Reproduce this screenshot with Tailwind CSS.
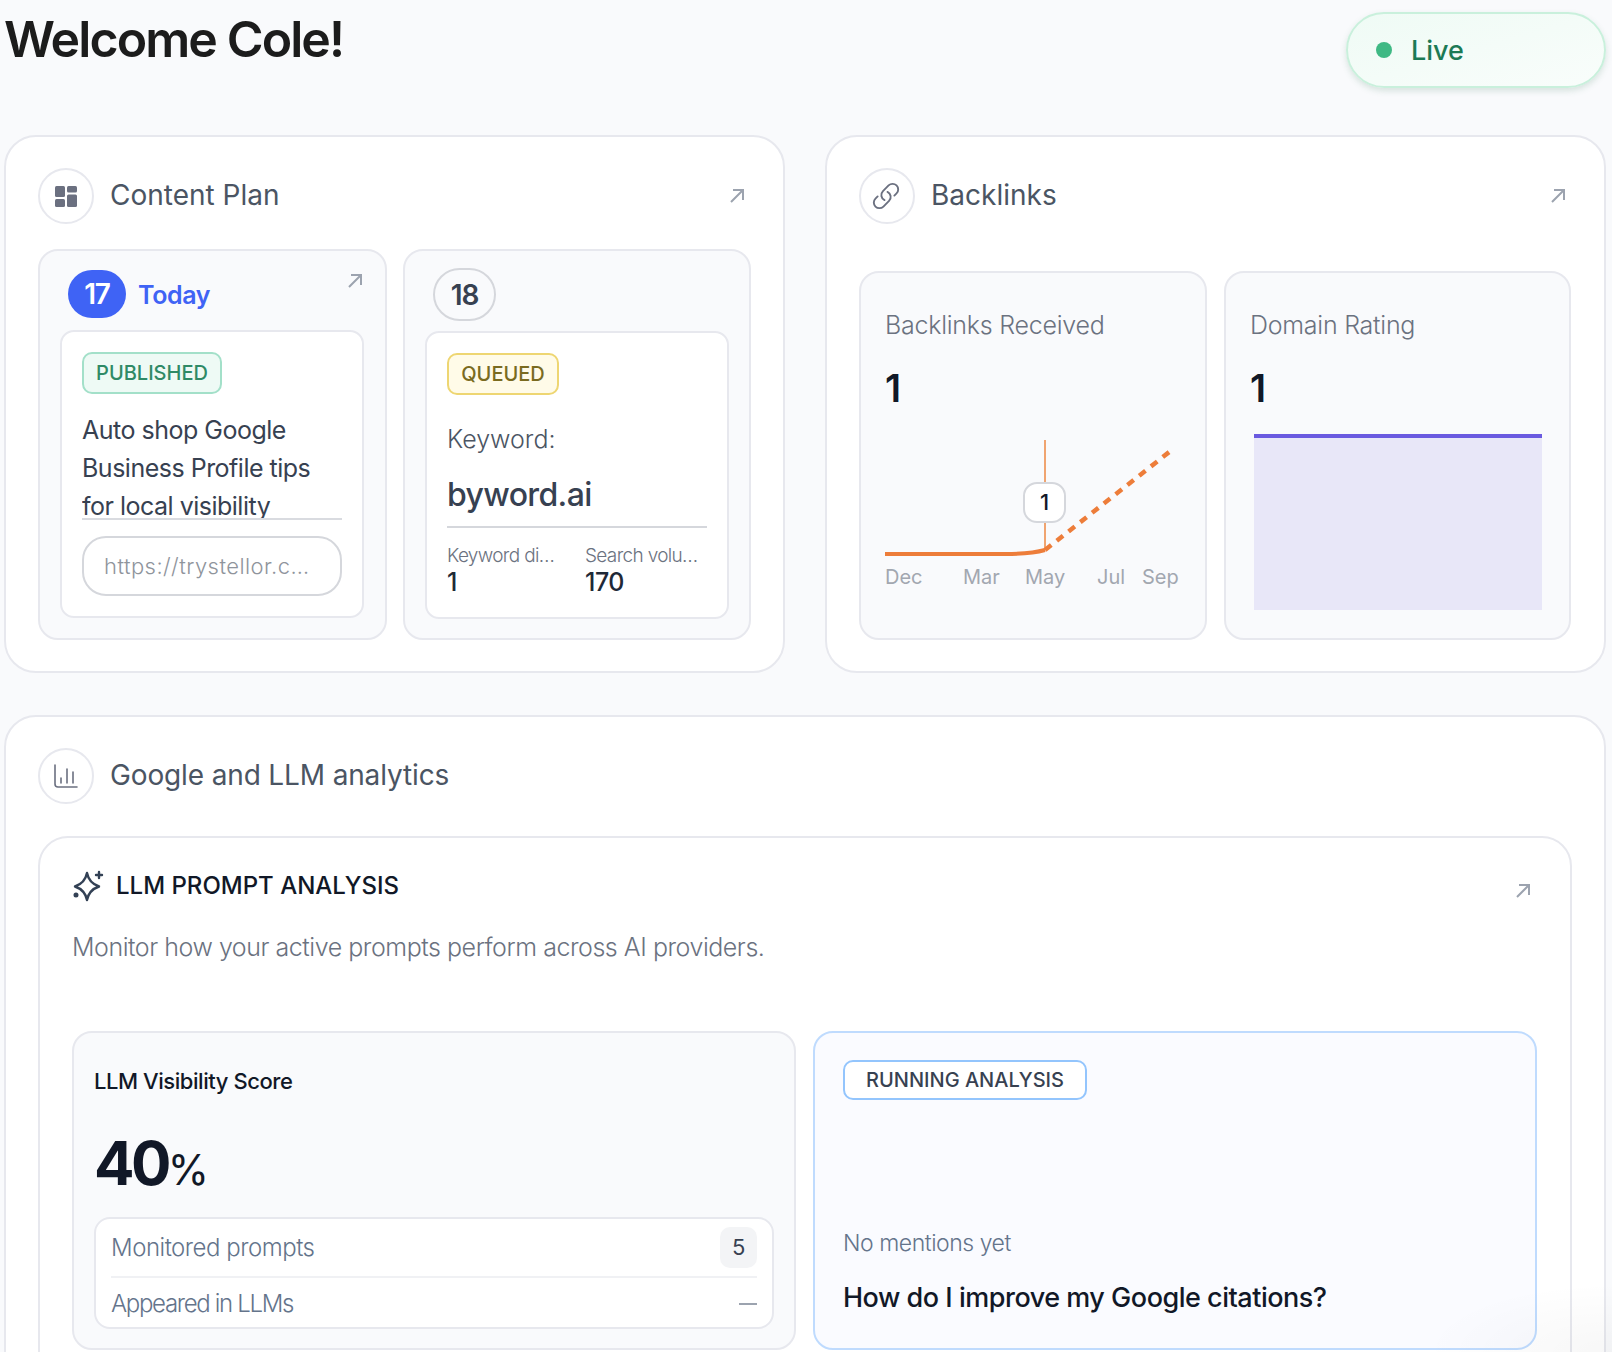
<!DOCTYPE html>
<html lang="en">
<head>
    <meta charset="UTF-8">
    <meta name="viewport" content="width=device-width, initial-scale=1.0">
    <title>Dashboard</title>
    <script src="https://cdn.jsdelivr.net/npm/@tailwindcss/browser@4"></script>
</head>
<body class="relative h-[1352px] overflow-hidden bg-[#f9fafc] font-['Inter',sans-serif] antialiased">
    <div class="ml-[4px] w-[1602px]">
        <!-- top bar -->
        <header class="flex h-[135px] items-start justify-between">
            <h1 class="mt-[11px] text-[50px] leading-[56px] font-semibold tracking-[-0.038em] text-[#1c1c1c]">Welcome Cole!</h1>
            <div class="mt-[12px] flex h-[76px] w-[260px] items-center rounded-full border-2 border-[#c9f0dc] bg-gradient-to-br from-[#effbf5] to-[#f9fdfb] pl-[28px] shadow-[0_3px_6px_rgba(60,120,90,0.18)]">
                <span class="h-[16px] w-[16px] rounded-full bg-[#3fb984]"></span>
                <span class="mt-[2px] ml-[19px] text-[27px] font-medium text-[#1c7a55]">Live</span>
            </div>
        </header>

        <div class="grid grid-cols-[781px_781px] gap-x-[40px]">
            <!-- content plan -->
            <section class="h-[538px] rounded-[32px] border-2 border-[#e7e8ee] bg-white px-[32px] pt-[31px]">
                <div class="flex h-[56px] items-center justify-between">
                    <div class="flex items-center">
                        <span class="flex h-[56px] w-[56px] items-center justify-center rounded-full border-2 border-[#e7e8ee]">
                            <svg width="22" height="21" viewBox="0 0 22 21" fill="#6b7080"><rect x="0" y="0" width="10" height="11" rx="1.5"/><rect x="12" y="0" width="10" height="6.5" rx="1.5"/><rect x="0" y="13" width="10" height="8" rx="1.5"/><rect x="12" y="8.5" width="10" height="12.5" rx="1.5"/></svg>
                        </span>
                        <h2 class="ml-[16px] pb-[3px] text-[28px] font-normal text-[#4b5563]">Content Plan</h2>
                    </div>
                    <svg class="mr-[6px]" width="16" height="16" viewBox="0 0 16 16" fill="none" stroke="#9ca3af" stroke-width="2"><path d="M4 2h10v10M14 2 2 14"/></svg>
                </div>

                <div class="mt-[25px] grid grid-cols-[349px_348px] gap-x-[16px]">
                    <!-- day 17 -->
                    <div class="relative h-[391px] rounded-[20px] border-2 border-[#e7e8ee] bg-[#f9fafc] pt-[19px] pr-[21px] pl-[20px]">
                        <svg class="absolute top-[22px] right-[22px]" width="16" height="16" viewBox="0 0 16 16" fill="none" stroke="#9ca3af" stroke-width="2"><path d="M4 2h10v10M14 2 2 14"/></svg>
                        <div class="flex h-[48px] items-center pl-[8px]">
                            <span class="flex h-[48px] w-[58px] items-center justify-center rounded-full bg-[#3f63f5] text-[28px] font-semibold tracking-[-0.04em] text-white">17</span>
                            <span class="mt-[4px] ml-[12px] text-[25px] font-semibold tracking-[-0.015em] text-[#3f63f5]">Today</span>
                        </div>
                        <div class="mt-[12px] h-[288px] rounded-[14px] border-2 border-[#e7e8ee] bg-white px-[20px] pt-[20px]">
                            <span class="flex h-[42px] w-[140px] items-center justify-center rounded-[10px] border-2 border-[#a3e0c9] bg-[#eefaf5] text-[20px] font-medium text-[#2f8a66]">PUBLISHED</span>
                            <p class="mt-[17px] h-[109px] w-[260px] overflow-hidden border-b-2 border-[#d9dbe0] text-[25px] leading-[38px] tracking-[-0.02em] text-[#374151]">Auto shop Google Business Profile tips for local visibility</p>
                            <div class="mt-[16px] flex h-[60px] w-[260px] items-center rounded-[24px] border-2 border-[#d5d7dc] pl-[20px] text-[22px] font-light tracking-[0.02em] text-[#8f949c]">https://trystellor.c…</div>
                        </div>
                    </div>

                    <!-- day 18 -->
                    <div class="h-[391px] rounded-[20px] border-2 border-[#e7e8ee] bg-[#f9fafc] px-[20px] pt-[17px]">
                        <span class="ml-[8px] flex h-[53px] w-[63px] items-center justify-center rounded-full border-2 border-[#d5d7dc] text-[28px] font-semibold tracking-[-0.04em] text-[#374151]">18</span>
                        <div class="mt-[10px] h-[288px] rounded-[14px] border-2 border-[#e7e8ee] bg-white px-[20px] pt-[20px]">
                            <span class="flex h-[42px] w-[112px] items-center justify-center rounded-[10px] border-2 border-[#eed672] bg-[#fffbe8] text-[20px] font-medium text-[#7a6b1f]">QUEUED</span>
                            <p class="mt-[27px] text-[25px] leading-[34px] font-light text-[#4b5563]">Keyword:</p>
                            <div class="mt-[17px] h-[55px] w-[260px] border-b-2 border-[#d5d7dc] text-[32px] leading-[44px] font-medium tracking-[-0.02em] text-[#374151]">byword.ai</div>
                            <div class="mt-[15px] flex">
                                <div class="w-[138px]">
                                    <p class="text-[19px] leading-[25px] font-light tracking-[-0.035em] text-[#6b7280]">Keyword di…</p>
                                    <p class="text-[25px] leading-[28px] font-medium text-[#1f2937]">1</p>
                                </div>
                                <div>
                                    <p class="text-[19px] leading-[25px] font-light tracking-[-0.035em] text-[#6b7280]">Search volu…</p>
                                    <p class="text-[25px] leading-[28px] font-medium tracking-[-0.02em] text-[#1f2937]">170</p>
                                </div>
                            </div>
                        </div>
                    </div>
                </div>
            </section>

            <!-- backlinks -->
            <section class="h-[538px] rounded-[32px] border-2 border-[#e7e8ee] bg-white px-[32px] pt-[31px]">
                <div class="flex h-[56px] items-center justify-between">
                    <div class="flex items-center">
                        <span class="flex h-[56px] w-[56px] items-center justify-center rounded-full border-2 border-[#e7e8ee]">
                            <svg class="mr-[2px]" width="30" height="30" viewBox="0 0 24 24" fill="none" stroke="#6b7080" stroke-width="1.5" stroke-linecap="round" stroke-linejoin="round"><path d="M13.19 8.688a4.5 4.5 0 0 1 1.242 7.244l-4.5 4.5a4.5 4.5 0 0 1-6.364-6.364l1.757-1.757m13.35-.622 1.757-1.757a4.5 4.5 0 0 0-6.364-6.364l-4.5 4.5a4.5 4.5 0 0 0 1.242 7.244"/></svg>
                        </span>
                        <h2 class="ml-[16px] pb-[3px] text-[28px] font-normal text-[#4b5563]">Backlinks</h2>
                    </div>
                    <svg class="mr-[6px]" width="16" height="16" viewBox="0 0 16 16" fill="none" stroke="#9ca3af" stroke-width="2"><path d="M4 2h10v10M14 2 2 14"/></svg>
                </div>

                <div class="mt-[47px] grid grid-cols-[348px_347px] gap-x-[17px]">
                    <div class="h-[369px] rounded-[20px] border-2 border-[#e7e8ee] bg-[#f9fafc] pt-[35px] pl-[24px]">
                        <p class="text-[25px] leading-[34px] font-light tracking-[-0.01em] text-[#6b7280]">Backlinks Received</p>
                        <p class="mt-[23px] text-[38px] leading-[46px] font-semibold text-[#111827]">1</p>
                        <!-- chart -->
                        <div class="relative mt-[19px] h-[162px] w-[300px]">
                            <svg width="300" height="162" viewBox="0 0 300 162" fill="none" class="block">
                                <path d="M160 10V120" stroke="#f0a470" stroke-width="2"/>
                                <path d="M0 124H120Q146 124 160 120" stroke="#ed7d3a" stroke-width="4"/>
                                <path d="M160 120 288 19" stroke="#ed7d3a" stroke-width="4.5" stroke-dasharray="8 7"/>
                                <g font-family="Inter, sans-serif" font-size="20" fill="#a2a7b0">
                                    <text x="0" y="154">Dec</text>
                                    <text x="78" y="154">Mar</text>
                                    <text x="140" y="154">May</text>
                                    <text x="212" y="154">Jul</text>
                                    <text x="257" y="154">Sep</text>
                                </g>
                            </svg>
                            <span class="absolute top-[52px] left-[138px] flex h-[41px] w-[43px] items-center justify-center rounded-[14px] border-2 border-[#d5d7dc] bg-white text-[22px] font-medium text-[#111827]">1</span>
                        </div>
                    </div>
                    <div class="h-[369px] rounded-[20px] border-2 border-[#e7e8ee] bg-[#f9fafc] pt-[35px] pl-[24px]">
                        <p class="text-[25px] leading-[34px] font-light tracking-[-0.01em] text-[#6b7280]">Domain Rating</p>
                        <p class="mt-[23px] text-[38px] leading-[46px] font-semibold text-[#111827]">1</p>
                        <div class="mt-[23px] ml-[4px] h-[176px] w-[288px] border-t-4 border-[#6a5ae0] bg-[#e8e7f8]"></div>
                    </div>
                </div>
            </section>
        </div>

        <!-- analytics -->
        <section class="mt-[42px] rounded-[32px] border-2 border-[#e7e8ee] bg-white px-[32px] pt-[32px] pb-[40px]">
            <div class="flex h-[54px] items-center">
                <span class="flex h-[56px] w-[56px] items-center justify-center rounded-full border-2 border-[#e7e8ee]">
                    <svg width="24" height="24" viewBox="0 0 24 24" fill="none" stroke="#6b7080" stroke-width="1.6" stroke-linecap="round"><path d="M1 1V20Q1 23 4 23H23"/><path d="M7 14V19M13 5V19M19 8V19"/></svg>
                </span>
                <h2 class="ml-[16px] pb-[3px] text-[28px] font-normal tracking-[-0.005em] text-[#4b5563]">Google and LLM analytics</h2>
            </div>

            <div class="relative mt-[33px] w-[1534px] rounded-[30px] border-2 border-[#e7e8ee] bg-white px-[32px] pt-[33px] pb-[40px]">
                <svg class="absolute top-[45px] right-[39px]" width="16" height="16" viewBox="0 0 16 16" fill="none" stroke="#9ca3af" stroke-width="2"><path d="M4 2h10v10M14 2 2 14"/></svg>
                <div class="flex h-[30px] items-center">
                    <svg width="32" height="32" viewBox="0 0 32 32" fill="none" stroke="#334155" stroke-width="2.4" stroke-linejoin="round" stroke-linecap="round"><path d="M15 3Q17 13 27 16.5 17 20 15 30 13 20 3 16.5 13 13 15 3Z"/><path d="M27 2V8M24 5H30"/><circle cx="4" cy="25" r="1.3" fill="#334155"/></svg>
                    <h3 class="ml-[12px] text-[24px] font-medium text-[#111827]">LLM PROMPT ANALYSIS</h3>
                </div>
                <p class="mt-[28px] text-[25px] leading-[36px] font-light tracking-[-0.0185em] text-[#6b7280]">Monitor how your active prompts perform across AI providers.</p>

                <div class="mt-[66px] grid grid-cols-[724px_724px] gap-x-[17px]">
                    <div class="h-[319px] rounded-[20px] border-2 border-[#e7e8ee] bg-[#f9fafc] px-[20px] pt-[32px]">
                        <p class="text-[22px] leading-[32px] font-[450] tracking-[-0.02em] text-[#111827]">LLM Visibility Score</p>
                        <p class="mt-[31px] text-[60px] leading-[70px] font-bold tracking-[-0.06em] text-[#111827]">40<span class="text-[42px] font-normal tracking-normal">%</span></p>
                        <div class="mt-[12px] h-[112px] w-[680px] rounded-[16px] border-2 border-[#e7e8ee] bg-white px-[15px] text-[24px] font-light tracking-[-0.02em] text-[#64748b]">
                            <div class="flex h-[59px] items-center justify-between border-b-2 border-[#f0f1f4]">
                                <span>Monitored prompts</span>
                                <span class="flex h-[41px] w-[37px] items-center justify-center rounded-[10px] bg-[#f3f4f6] text-[22px] font-normal text-[#374151]">5</span>
                            </div>
                            <div class="flex h-[51px] items-center justify-between">
                                <span class="tracking-[-0.055em]">Appeared in LLMs</span>
                                <span class="h-[2px] w-[18px] bg-[#9ca3af]"></span>
                            </div>
                        </div>
                    </div>
                    <div class="h-[319px] rounded-[20px] border-2 border-[#bfdbfe] bg-[#fafbff] px-[28px] pt-[27px]">
                        <span class="flex h-[40px] w-[244px] items-center justify-center rounded-[10px] border-2 border-[#93c5fd] bg-white text-[20px] font-medium text-[#374151]">RUNNING ANALYSIS</span>
                        <p class="mt-[127px] text-[23px] leading-[32px] font-light tracking-[-0.02em] text-[#64748b]">No mentions yet</p>
                        <p class="mt-[19px] text-[27px] leading-[40px] font-[450] tracking-[-0.018em] text-[#111827]">How do I improve my Google citations?</p>
                    </div>
                </div>
            </div>
        </section>
    </div>
    <!-- soft shade over the bottom right corner -->
    <div class="pointer-events-none absolute right-0 bottom-0 h-[70px] w-[190px] bg-[radial-gradient(ellipse_at_bottom_right,rgba(0,0,0,0.03),transparent_70%)]"></div>
</body>
</html>
